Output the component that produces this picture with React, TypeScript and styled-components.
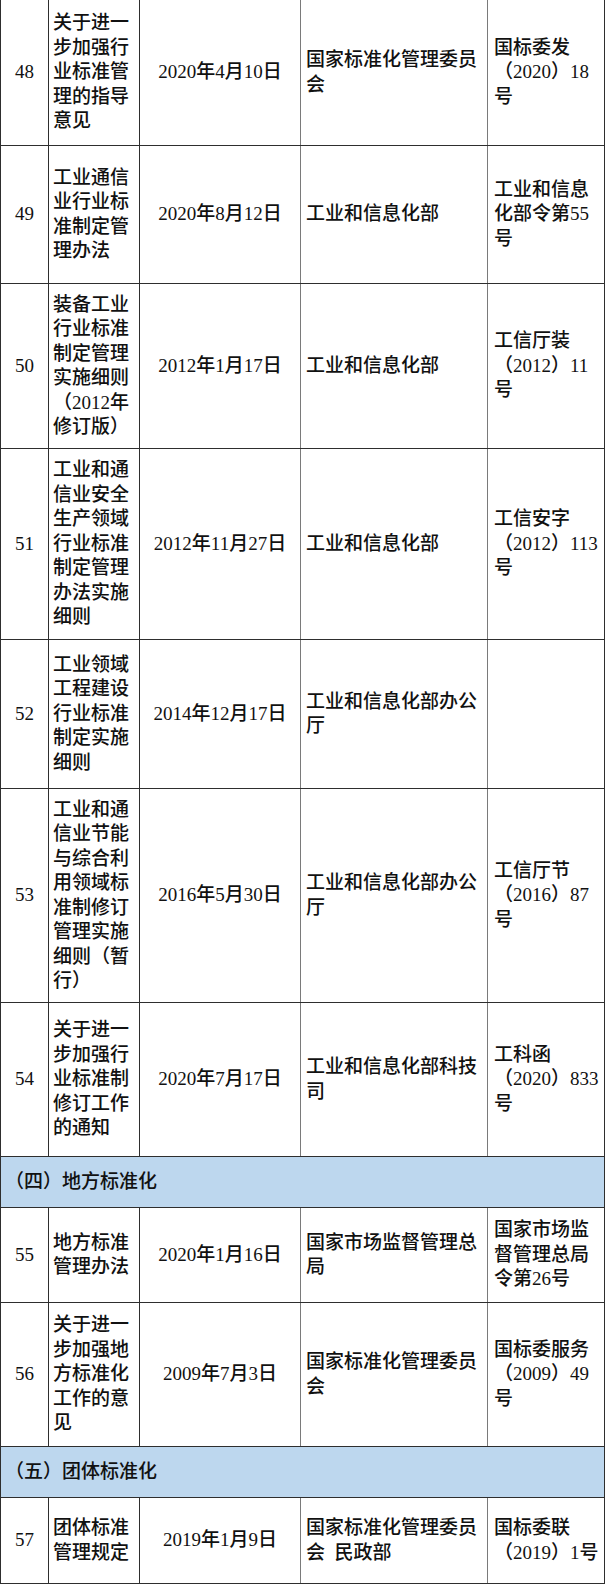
import React from 'react';
import styled, { createGlobalStyle } from 'styled-components';

const GlobalStyle = createGlobalStyle`
    html, body {
        margin: 0;
        padding: 0;
        background: #fff;
    }
    * {
        box-sizing: border-box;
    }
`;

type Item = {
    no: string;
    title: string;
    date: string;
    org: string;
    doc: string;
    h: number;
};

type Section = { section: string; h: number };

const rows: (Item | Section)[] = [
    { no: '48', title: '关于进一步加强行业标准管理的指导意见', date: '2020年4月10日', org: '国家标准化管理委员会', doc: '国标委发（2020）18号', h: 146 },
    { no: '49', title: '工业通信业行业标准制定管理办法', date: '2020年8月12日', org: '工业和信息化部', doc: '工业和信息化部令第55号', h: 138 },
    { no: '50', title: '装备工业行业标准制定管理实施细则（2012年修订版）', date: '2012年1月17日', org: '工业和信息化部', doc: '工信厅装（2012）11号', h: 165 },
    { no: '51', title: '工业和通信业安全生产领域行业标准制定管理办法实施细则', date: '2012年11月27日', org: '工业和信息化部', doc: '工信安字（2012）113号', h: 191 },
    { no: '52', title: '工业领域工程建设行业标准制定实施细则', date: '2014年12月17日', org: '工业和信息化部办公厅', doc: '', h: 149 },
    { no: '53', title: '工业和通信业节能与综合利用领域标准制修订管理实施细则（暂行）', date: '2016年5月30日', org: '工业和信息化部办公厅', doc: '工信厅节（2016）87号', h: 214 },
    { no: '54', title: '关于进一步加强行业标准制修订工作的通知', date: '2020年7月17日', org: '工业和信息化部科技司', doc: '工科函（2020）833号', h: 154 },
    { section: '（四）地方标准化', h: 51 },
    { no: '55', title: '地方标准管理办法', date: '2020年1月16日', org: '国家市场监督管理总局', doc: '国家市场监督管理总局令第26号', h: 95 },
    { no: '56', title: '关于进一步加强地方标准化工作的意见', date: '2009年7月3日', org: '国家标准化管理委员会', doc: '国标委服务（2009）49号', h: 144 },
    { section: '（五）团体标准化', h: 51 },
    { no: '57', title: '团体标准管理规定', date: '2019年1月9日', org: '国家标准化管理委员会\u2002民政部', doc: '国标委联（2019）1号', h: 86 },
];

export default function App() {
    return (
        <>
            <GlobalStyle />
            <Table>
                {rows.map((r, i) =>
                    'section' in r ? (
                        <SectionRow key={i} $h={r.h}>{r.section}</SectionRow>
                    ) : (
                        <Row key={i} $h={r.h}>
                            <Cell $align="center">{r.no}</Cell>
                            <Cell $pl={4} $pr={2}>{r.title}</Cell>
                            <Cell $align="center" $line="#7a7a7a">{r.date}</Cell>
                            <Cell $pl={5} $pr={2} $line="#7a7a7a">{r.org}</Cell>
                            <Cell $pl={6} $pr={3}>{r.doc}</Cell>
                        </Row>
                    )
                )}
            </Table>
        </>
    );
}

const Table = styled.div`
    width: 605px;
    border-left: 1px solid #2e2e2e;
    font-family: "Liberation Serif", "Noto Sans CJK SC", serif;
    font-size: 19px;
    font-weight: 500;
    line-height: 24.5px;
    color: #111;
`;

const Row = styled.div<{ $h: number }>`
    display: grid;
    grid-template-columns: 48px 91px 161px 187px 117px;
    height: ${p => p.$h}px;
    border-bottom: 1px solid #2e2e2e;
`;

const Cell = styled.div<{ $align?: string; $pl?: number; $pr?: number; $line?: string }>`
    display: flex;
    align-items: center;
    justify-content: ${p => (p.$align === 'center' ? 'center' : 'flex-start')};
    text-align: ${p => p.$align || 'left'};
    padding: 0 ${p => p.$pr ?? 0}px 0 ${p => p.$pl ?? 0}px;
    border-right: 1px solid ${p => p.$line || '#2e2e2e'};
    line-break: strict;
`;

const SectionRow = styled.div<{ $h: number }>`
    display: flex;
    align-items: center;
    height: ${p => p.$h}px;
    padding-left: 4px;
    background: #bdd7ee;
    border-right: 1px solid #2e2e2e;
    border-bottom: 1px solid #2e2e2e;
`;
